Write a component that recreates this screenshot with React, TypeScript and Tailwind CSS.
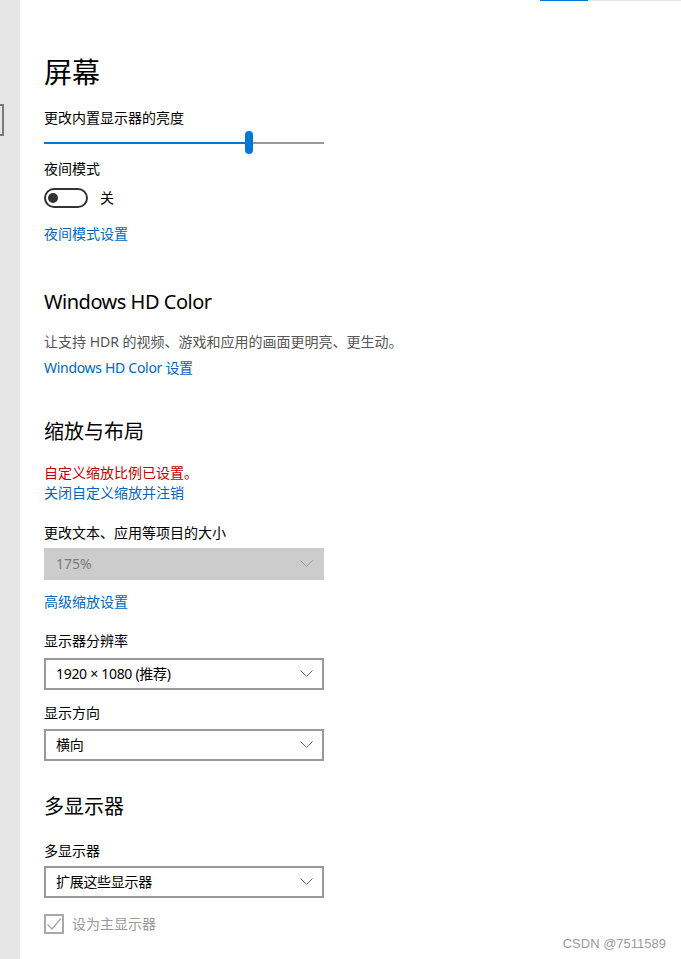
import React from "react";

const FONT = { fontFamily: '"Noto Sans", "Noto Sans CJK SC", sans-serif' };

function Chevron({ color }: { color: string }) {
  return (
    <svg width="13" height="8" viewBox="0 0 13 8" fill="none">
      <path d="M0.5 0.5L6.5 6.5L12.5 0.5" stroke={color} strokeWidth="1" />
    </svg>
  );
}

function Dropdown({ value, className = "" }: { value: string; className?: string }) {
  return (
    <div
      className={`w-[280px] h-[32px] border-2 border-[#999999] bg-white flex items-center justify-between pl-[10px] pr-[9px] text-[14px] leading-[20px] text-black ${className}`}
    >
      <span className="tracking-[-0.3px]">{value}</span>
      <Chevron color="#666666" />
    </div>
  );
}

export default function App() {
  return (
    <div className="flex w-[681px] h-[959px] bg-white overflow-hidden relative" style={FONT}>
      {/* left strip */}
      <div className="w-[20px] h-full bg-[#e6e6e6] shrink-0 flex flex-col">
        <div className="mt-[104px] w-[4px] h-[32px] border-2 border-l-0 border-[#7a7a7a]" />
      </div>

      {/* main */}
      <div className="flex-1 flex flex-col">
        <div className="flex h-[1px]">
          <div className="w-[520px]" />
          <div className="w-[48px] bg-[#0078d7]" />
          <div className="flex-1 bg-[#e3e3e3]" />
        </div>

        <div className="pl-[24px] flex flex-col items-start">
          <h1 className="mt-[53px] text-[28px] leading-[36px] text-black font-normal">屏幕</h1>

          <div className="mt-[18px] text-[14px] leading-[20px] text-black">更改内置显示器的亮度</div>

          {/* slider */}
          <div className="mt-[3px] w-[280px] h-[23px] flex items-center">
            <div className="w-[201px] h-[2px] bg-[#0078d7]" />
            <div className="w-[8px] h-[23px] rounded-full bg-[#0078d7]" />
            <div className="flex-1 h-[2px] bg-[#999999]" />
          </div>

          <div className="mt-[5px] text-[14px] leading-[20px] text-black">夜间模式</div>

          <div className="mt-[9px] flex items-center gap-[12px]">
            <div className="w-[44px] h-[20px] rounded-full border-2 border-[#333333] flex items-center pl-[2px]">
              <div className="w-[10px] h-[10px] rounded-full bg-[#333333]" />
            </div>
            <span className="text-[14px] leading-[20px] text-black">关</span>
          </div>

          <a className="mt-[16px] text-[14px] leading-[20px] text-[#0067c0]">夜间模式设置</a>

          <h2 className="mt-[44px] text-[20px] leading-[28px] text-black font-normal tracking-[-0.5px]">Windows HD Color</h2>

          <div className="mt-[16px] text-[14px] leading-[20px] text-[#555555]">
            让支持 HDR 的视频、游戏和应用的画面更明亮、更生动。
          </div>

          <a className="mt-[6px] text-[14px] leading-[20px] text-[#0067c0] tracking-[-0.3px]">Windows HD Color 设置</a>

          <h2 className="mt-[40px] text-[20px] leading-[28px] text-black font-normal">缩放与布局</h2>

          <div className="mt-[17px] text-[14px] leading-[20px] text-[#c80000]">自定义缩放比例已设置。</div>
          <a className="text-[14px] leading-[20px] text-[#0067c0]">关闭自定义缩放并注销</a>

          <div className="mt-[20px] text-[14px] leading-[20px] text-black">更改文本、应用等项目的大小</div>

          <div className="mt-[5px] w-[280px] h-[32px] bg-[#cccccc] flex items-center justify-between pl-[12px] pr-[11px] text-[14px] leading-[20px] text-[#7a7a7a]">
            <span>175%</span>
            <Chevron color="#9a9a9a" />
          </div>

          <a className="mt-[12px] text-[14px] leading-[20px] text-[#0067c0]">高级缩放设置</a>

          <div className="mt-[19px] text-[14px] leading-[20px] text-black">显示器分辨率</div>
          <Dropdown className="mt-[7px]" value="1920 × 1080 (推荐)" />

          <div className="mt-[13px] text-[14px] leading-[20px] text-black">显示方向</div>
          <Dropdown className="mt-[6px]" value="横向" />

          <h2 className="mt-[32px] text-[20px] leading-[28px] text-black font-normal">多显示器</h2>

          <div className="mt-[20px] text-[14px] leading-[20px] text-black">多显示器</div>
          <Dropdown className="mt-[5px]" value="扩展这些显示器" />

          <div className="mt-[16px] flex items-center gap-[8px]">
            <div className="w-[20px] h-[20px] border-2 border-[#a8a8a8] flex items-center justify-center">
              <svg width="16" height="16" viewBox="0 0 16 16" fill="none">
                <path d="M1.5 8.5L6 13L15 2.5" stroke="#a8a8a8" strokeWidth="1.3" />
              </svg>
            </div>
            <span className="text-[14px] leading-[20px] text-[#999999]">设为主显示器</span>
          </div>
        </div>
      </div>

      <div
        className="absolute right-[15px] bottom-[7px] text-[13px] leading-[16px] text-[#9a9a9a]"
        style={{ fontFamily: '"Liberation Sans", Arial, sans-serif' }}
      >
        CSDN @7511589
      </div>
    </div>
  );
}
